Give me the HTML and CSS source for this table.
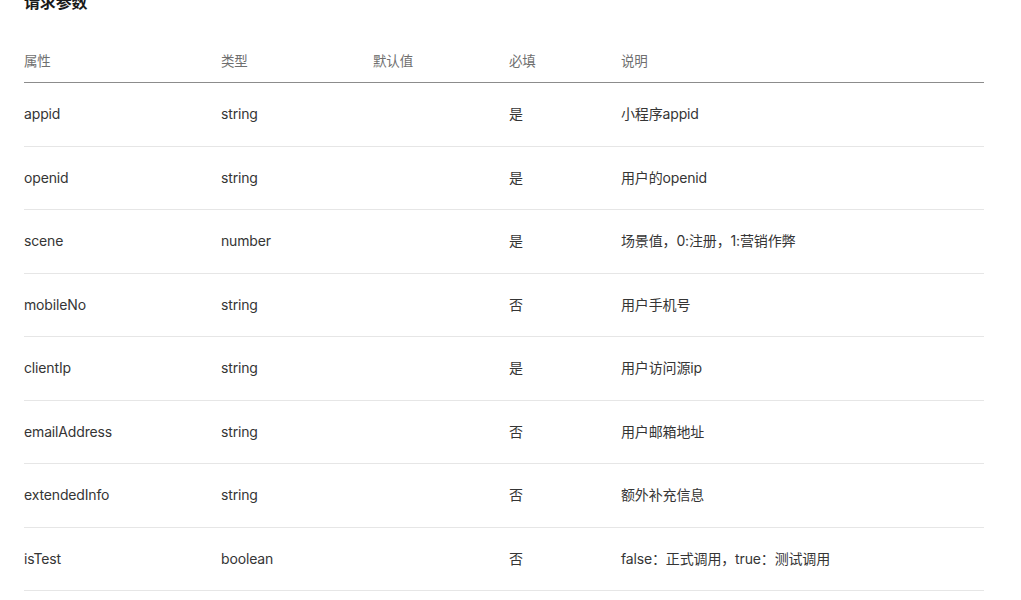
FILE: index.html
```html
<!DOCTYPE html>
<html lang="zh-CN">
<head>
<meta charset="utf-8">
<title>请求参数</title>
<link rel="stylesheet" href="styles.css">
</head>
<body>
<main class="doc">
  <h3 class="section-title">请求参数</h3>
  <table class="params">
    <colgroup>
      <col class="c-name"><col class="c-type"><col class="c-default"><col class="c-req"><col class="c-desc">
    </colgroup>
    <thead>
      <tr><th>属性</th><th>类型</th><th>默认值</th><th>必填</th><th>说明</th></tr>
    </thead>
    <tbody>
      <tr><td>appid</td><td>string</td><td></td><td>是</td><td>小程序appid</td></tr>
      <tr><td>openid</td><td>string</td><td></td><td>是</td><td>用户的openid</td></tr>
      <tr><td>scene</td><td>number</td><td></td><td>是</td><td>场景值，0:注册，1:营销作弊</td></tr>
      <tr><td>mobileNo</td><td>string</td><td></td><td>否</td><td>用户手机号</td></tr>
      <tr><td>clientIp</td><td>string</td><td></td><td>是</td><td>用户访问源ip</td></tr>
      <tr><td>emailAddress</td><td>string</td><td></td><td>否</td><td>用户邮箱地址</td></tr>
      <tr><td>extendedInfo</td><td>string</td><td></td><td>否</td><td>额外补充信息</td></tr>
      <tr><td>isTest</td><td>boolean</td><td></td><td>否</td><td>false：正式调用，true：测试调用</td></tr>
    </tbody>
  </table>
</main>
</body>
</html>
```

FILE: styles.css
```css
html, body {
  margin: 0;
  padding: 0;
  background: #ffffff;
}

body {
  font-family: Inter, "Noto Sans CJK SC", "Noto Sans", sans-serif;
  color: #333333;
  font-size: 14px;
  letter-spacing: -0.15px;
}

.doc {
  padding: 0 37px 0 24px;
}

.section-title {
  margin: -10px 0 26px;
  font-size: 16px;
  line-height: 24px;
  font-weight: 700;
  color: #1a1a1a;
}

.params {
  width: 960px;
  border-collapse: collapse;
  table-layout: fixed;
}

.c-name { width: 197px; }
.c-type { width: 152px; }
.c-default { width: 136px; }
.c-req { width: 112px; }
.c-desc { width: 363px; }

.params th {
  text-align: left;
  font-weight: 400;
  font-size: 13.5px;
  color: #6f6f6f;
  line-height: 22px;
  padding: 10px 0 10px;
  border-bottom: 1px solid #8c8c8c;
}

.params td {
  height: 62.5px;
  padding: 0;
  line-height: 22px;
  vertical-align: middle;
  border-bottom: 1px solid #e6e6e6;
  color: #353535;
}
```
